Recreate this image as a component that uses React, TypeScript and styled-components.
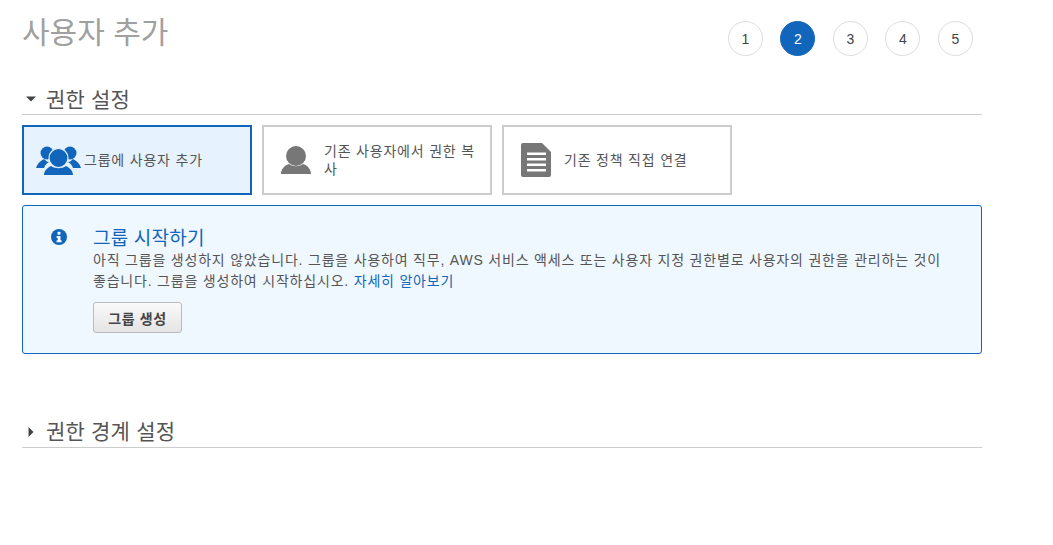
import React from 'react';
import styled, { createGlobalStyle } from 'styled-components';

const GlobalStyle = createGlobalStyle`
  html, body {
    margin: 0;
    padding: 0;
    background: #fff;
    font-family: "Liberation Sans", "Noto Sans CJK KR", sans-serif;
    color: #555;
  }
`;

const Page = styled.div`
  width: 960px;
  padding: 0 0 0 22px;
`;

const Header = styled.div`
  display: flex;
  justify-content: space-between;
  align-items: flex-start;
  height: 84px;
`;

const Title = styled.h1`
  margin: 13px 0 0;
  font-size: 30px;
  line-height: 40px;
  font-weight: 400;
  color: #a0a0a0;
`;

const Steps = styled.div`
  display: flex;
  gap: 17.5px;
  margin: 21px 9.1px 0 0;
`;

const Step = styled.div<{ $active?: boolean }>`
  box-sizing: border-box;
  width: 35px;
  height: 35px;
  border-radius: 50%;
  display: flex;
  align-items: center;
  justify-content: center;
  font-size: 14px;
  color: ${p => (p.$active ? '#fff' : '#444')};
  background: ${p => (p.$active ? '#1166bb' : '#fff')};
  border: 1px solid ${p => (p.$active ? '#1166bb' : '#ddd')};
`;

const SectionHeader = styled.div`
  display: flex;
  align-items: center;
  height: 31px;
  padding-bottom: 3px;
  box-sizing: border-box;
  border-bottom: 1px solid #ccc;
  font-size: 21px;
  letter-spacing: 0.2px;
  color: #555;
`;

const LowerHeader = styled(SectionHeader)`
  height: 32px;
  padding-bottom: 3px;
  margin-top: 62px;
`;

const Arrow = styled.span`
  display: flex;
  width: 24px;
  flex: none;
  padding-left: 4px;
  box-sizing: border-box;
`;

const Cards = styled.div`
  display: flex;
  gap: 10px;
  margin-top: 10px;
`;

const Card = styled.div<{ $selected?: boolean }>`
  box-sizing: border-box;
  width: 230px;
  height: 70px;
  display: flex;
  align-items: center;
  padding-right: 10px;
  border: 2px solid ${p => (p.$selected ? '#1166bb' : '#ccc')};
  background: ${p => (p.$selected ? '#e6f2fd' : '#fff')};
  font-size: 14px;
  letter-spacing: 0.8px;
  line-height: 18px;
  color: #555;
`;

const CardIcon = styled.div<{ $left: number; $gap: number }>`
  flex: none;
  display: flex;
  margin: 0 ${p => p.$gap}px 0 ${p => p.$left}px;
`;

const InfoBox = styled.div`
  box-sizing: border-box;
  display: flex;
  height: 149px;
  margin-top: 10px;
  padding: 22px 30px 0 28px;
  border: 1px solid #1166bb;
  border-radius: 3px;
  background: #f0f8ff;
`;

const InfoIcon = styled.div`
  flex: none;
  width: 42px;
  padding-top: 1px;
`;

const InfoBody = styled.div`
  flex: 1;
`;

const InfoTitle = styled.div`
  font-size: 19px;
  line-height: 22px;
  letter-spacing: 0.2px;
  color: #1166bb;
`;

const InfoText = styled.p`
  margin: 0;
  font-size: 14px;
  letter-spacing: 0.8px;
  line-height: 21px;
  color: #555;
`;

const TextLink = styled.a`
  color: #1166bb;
  text-decoration: none;
`;

const Button = styled.button`
  display: block;
  box-sizing: border-box;
  width: 89px;
  height: 31px;
  margin-top: 10px;
  padding: 0;
  border: 1px solid #bbb;
  border-radius: 3px;
  background: linear-gradient(#fafafa, #e4e4e4);
  font-family: inherit;
  font-size: 14px;
  letter-spacing: 0.6px;
  font-weight: 700;
  color: #444;
`;

const GroupIcon = () => (
  <svg width="45" height="29" viewBox="0 0 45 29" fill="#1166bb" style={{ display: 'block' }}>
    <circle cx="11" cy="7" r="6.5" />
    <circle cx="34" cy="7" r="6.5" />
    <path d="M0 22c1-4 4-7 8-9 2 2 3 3 5 3-2 1-4 3-5 6H0z" />
    <path d="M45 22c-1-4-4-7-8-9-2 2-3 3-5 3 2 1 4 3 5 6h8z" />
    <circle cx="22.5" cy="12" r="9.5" stroke="#e6f2fd" strokeWidth="1.2" />
    <path d="M8 29c0-4 3-7 7-9 4 3 11 3 15 0 4 2 7 5 7 9H8z" />
  </svg>
);

const UserIcon = () => (
  <svg width="30" height="28" viewBox="0 0 30 28" fill="#777" style={{ display: 'block' }}>
    <circle cx="15" cy="10" r="10" />
    <path d="M0 28c0-5 4-9 8-10 4 3 10 3 14 0 4 1 8 5 8 10H0z" />
  </svg>
);

const DocIcon = () => (
  <svg width="30" height="34" viewBox="0 0 30 34" fill="#777" style={{ display: 'block' }}>
    <path d="M2 0h19l9 9v23a2 2 0 0 1-2 2H2a2 2 0 0 1-2-2V2a2 2 0 0 1 2-2z" />
    <path d="M6 9.5h19v2.5H6zM6 15h19v2.5H6zM6 20.5h19V23H6zM6 26h19v2.5H6z" fill="#fff" />
  </svg>
);

const InfoGlyph = () => (
  <svg width="16" height="16" viewBox="0 0 17 17" style={{ display: 'block' }}>
    <circle cx="8.5" cy="8.5" r="8.5" fill="#1166bb" />
    <rect x="7" y="3" width="3" height="3" fill="#fff" />
    <path d="M6 7.5h4V12h1.2v2H6v-2h1.2V9.5H6z" fill="#fff" />
  </svg>
);

const CaretDown = () => (
  <svg width="10" height="6" viewBox="0 0 10 5" fill="#444" style={{ display: 'block', marginTop: 3 }}>
    <path d="M0 0h10L5 5z" />
  </svg>
);

const CaretRight = () => (
  <svg width="6" height="10" viewBox="0 0 5 10" fill="#444" style={{ display: 'block', marginLeft: 2, marginTop: 3 }}>
    <path d="M0 0l5 5-5 5z" />
  </svg>
);

const App: React.FC = () => {
  return (
    <Page>
      <GlobalStyle />
      <Header>
        <Title>사용자 추가</Title>
        <Steps>
          {[1, 2, 3, 4, 5].map(n => (
            <Step key={n} $active={n === 2}>{n}</Step>
          ))}
        </Steps>
      </Header>
      <SectionHeader>
        <Arrow><CaretDown /></Arrow>
        권한 설정
      </SectionHeader>
      <Cards>
        <Card $selected>
          <CardIcon $left={12} $gap={3}><GroupIcon /></CardIcon>
          그룹에 사용자 추가
        </Card>
        <Card>
          <CardIcon $left={17} $gap={13}><UserIcon /></CardIcon>
          기존 사용자에서 권한 복사
        </Card>
        <Card>
          <CardIcon $left={17} $gap={13}><DocIcon /></CardIcon>
          기존 정책 직접 연결
        </Card>
      </Cards>
      <InfoBox>
        <InfoIcon><InfoGlyph /></InfoIcon>
        <InfoBody>
          <InfoTitle>그룹 시작하기</InfoTitle>
          <InfoText>
            아직 그룹을 생성하지 않았습니다. 그룹을 사용하여 직무, AWS 서비스 액세스 또는 사용자 지정 권한별로 사용자의 권한을 관리하는 것이 좋습니다. 그룹을 생성하여 시작하십시오. <TextLink href="#">자세히 알아보기</TextLink>
          </InfoText>
          <Button>그룹 생성</Button>
        </InfoBody>
      </InfoBox>
      <LowerHeader>
        <Arrow><CaretRight /></Arrow>
        권한 경계 설정
      </LowerHeader>
    </Page>
  );
};

export default App;
